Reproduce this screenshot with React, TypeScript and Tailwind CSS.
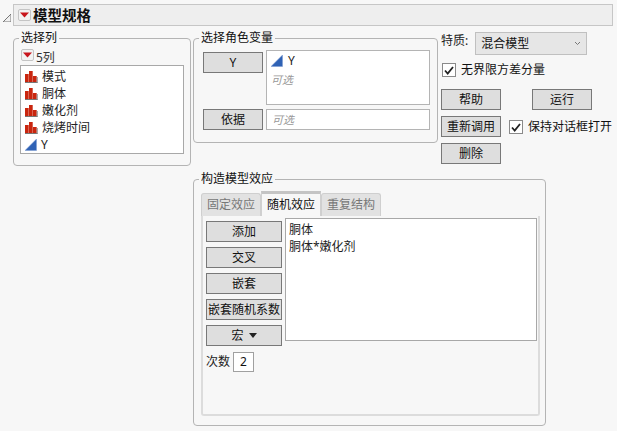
import React from "react";

const font = { fontFamily: '"Noto Sans", "Noto Sans CJK SC", sans-serif' };

function RedMenu({ className = "" }: { className?: string }) {
  return (
    <span className={"flex h-[12px] w-[13px] shrink-0 items-center justify-center rounded-[2px] border border-[#c4c4c4] bg-[#f2f2f2] " + className}>
      <svg width="9" height="6" viewBox="0 0 9 6"><path d="M0 0.5H9L4.5 5.5Z" fill="#c8161d" /></svg>
    </span>
  );
}

function Bars() {
  return (
    <svg width="13" height="12" viewBox="0 0 13 12" className="shrink-0">
      <rect x="0" y="3" width="3.7" height="8" fill="#c9260f" />
      <rect x="4" y="0" width="3.7" height="11" fill="#c9260f" />
      <rect x="8" y="5" width="3.7" height="6" fill="#c9260f" />
      <rect x="0" y="11" width="12.5" height="1" fill="#777" />
      <rect x="11.7" y="6" width="1" height="6" fill="#888" />
    </svg>
  );
}

function Tri() {
  return (
    <svg width="12" height="12" viewBox="0 0 12 12" className="shrink-0">
      <path d="M0 11.5L11.5 0V11.5Z" fill="#2f62b5" stroke="#7d9bd0" strokeWidth="0.5" />
    </svg>
  );
}

function Btn({ children, className = "" }: { children: React.ReactNode; className?: string }) {
  return (
    <div className={"flex h-[21px] items-center justify-center whitespace-nowrap border border-[#787878] bg-[#dedede] text-[12px] leading-none text-[#111] " + className}>
      {children}
    </div>
  );
}

function Group({ title, className = "", children }: { title: string; className?: string; children: React.ReactNode }) {
  return (
    <fieldset className={"min-w-0 rounded-[4px] border border-[#b4b4b4] " + className}>
      <legend className="ml-[5px] px-[2px] text-[12px] leading-[16px] text-[#111]">{title}</legend>
      {children}
    </fieldset>
  );
}

function Check({ label, className = "" }: { label: string; className?: string }) {
  return (
    <div className={"flex items-center gap-[5px] " + className}>
      <span className="flex h-[14px] w-[14px] items-center justify-center border border-[#8a8a8a] bg-white">
        <svg width="10" height="9" viewBox="0 0 10 9"><path d="M1 4.5L3.7 7.5L9 1" fill="none" stroke="#222" strokeWidth="1.8" /></svg>
      </span>
      <span className="whitespace-nowrap text-[12px] leading-none text-[#111]">{label}</span>
    </div>
  );
}

export default function App() {
  const cols: [string, boolean][] = [["模式", true], ["胴体", true], ["嫩化剂", true], ["烧烤时间", true], ["Y", false]];
  return (
    <div style={font} className="h-[431px] w-[617px] overflow-hidden bg-[#f7f7f7] pl-[3px] pt-[4px]">
      <div className="flex items-center gap-[2px]">
        <svg width="8" height="8" viewBox="0 0 8 8" className="mt-[6px] shrink-0"><path d="M0 8L8 0V8Z" fill="#f0f0f0" stroke="#777" strokeWidth="1" /></svg>
        <div className="flex h-[22px] w-[600px] items-center gap-[2px] border border-[#c6c6c6] bg-[#eeeeee] pl-[4px]">
          <RedMenu />
          <span className="text-[14.5px] font-bold leading-none text-[#111]">模型规格</span>
        </div>
      </div>

      <div className="ml-[10px] mt-[4px] flex items-start">
        <Group title="选择列" className="h-[136px] w-[178px]">
          <div className="flex h-[16px] items-start gap-[2px] pl-[7px] pt-[3px]">
            <RedMenu />
            <span className="mt-[3px] text-[12px] leading-none text-[#333]">5列</span>
          </div>
          <div className="ml-[6px] mt-[3px] h-[89px] w-[164px] border border-[#a8a8a8] bg-white pl-[4px] pt-[2px]">
            {cols.map(([n, nom]) => (
              <div key={n} className="flex h-[17px] items-center gap-[4px] text-[12px] leading-none text-[#222]">
                {nom ? <Bars /> : <Tri />}
                <span>{n}</span>
              </div>
            ))}
          </div>
        </Group>

        <Group title="选择角色变量" className="ml-[2px] h-[113px] w-[245px]">
          <div className="pl-[9px]">
            <div className="flex gap-[3px] pt-[4px]">
              <Btn className="mt-[2px] w-[60px]">Y</Btn>
              <div className="h-[55px] w-[164px] border border-[#b4b4b4] bg-white pl-[4px] pt-[2px]">
                <div className="flex h-[16px] items-center gap-[5px] text-[12px] leading-none text-[#222]"><Tri /><span>Y</span></div>
                <div className="mt-[5px] text-[11px] italic leading-none text-[#999]">可选</div>
              </div>
            </div>
            <div className="mt-[4px] flex gap-[3px]">
              <Btn className="w-[60px]">依据</Btn>
              <div className="flex h-[21px] w-[164px] items-center border border-[#b4b4b4] bg-white pl-[5px] text-[11px] italic leading-none text-[#999]">可选</div>
            </div>
          </div>
        </Group>

        <div className="ml-[3px] flex w-[172px] flex-col pt-[2px]">
          <div className="flex items-center gap-[7px]">
            <span className="mb-[5px] text-[12px] leading-none text-[#222]">特质:</span>
            <div className="flex h-[23px] w-[112px] items-center justify-between border border-[#c0c0c0] bg-[#e6e6e6] pl-[5px] pr-[5px]">
              <span className="text-[12px] leading-none text-[#111]">混合模型</span>
              <svg width="7" height="5" viewBox="0 0 7 5"><path d="M1 1L3.5 3.5L6 1" fill="none" stroke="#777" strokeWidth="1" /></svg>
            </div>
          </div>
          <Check label="无界限方差分量" className="ml-[1px] mt-[8px]" />
          <div className="mt-[12px] flex gap-[31px]">
            <Btn className="w-[60px]">帮助</Btn>
            <Btn className="w-[60px]">运行</Btn>
          </div>
          <div className="mt-[6px] flex items-center gap-[8px]">
            <Btn className="w-[60px]">重新调用</Btn>
            <Check label="保持对话框打开" className="mt-[1px]" />
          </div>
          <Btn className="mt-[6px] w-[60px]">删除</Btn>
        </div>
      </div>

      <div className="ml-[190px] mt-[5px]">
        <Group title="构造模型效应" className="h-[255px] w-[353px]">
          <div className="pl-[7px]">
            <div className="flex h-[29px] items-end">
              <div className="flex h-[23px] w-[60px] items-center justify-center rounded-t-[3px] border border-b-0 border-[#cfcfcf] bg-[#e2e2e2] text-[12px] leading-none text-[#777]">固定效应</div>
              <div className="flex h-[25px] w-[60px] items-center justify-center border-x border-t-[3px] border-x-[#d0d0d0] border-t-[#c4c4c4] bg-[#f7f7f7] text-[12px] leading-none text-[#111]">随机效应</div>
              <div className="flex h-[23px] w-[60px] items-center justify-center rounded-t-[3px] border border-b-0 border-[#cfcfcf] bg-[#e2e2e2] text-[12px] leading-none text-[#777]">重复结构</div>
            </div>
            <div className="flex h-[200px] w-[339px] gap-[3px] rounded-b-[3px] border-x-2 border-b-2 border-[#dcdcdc] pl-[3px] pt-[2px]">
              <div className="flex w-[76px] flex-col gap-[5px] pt-[3px]">
                <Btn>添加</Btn>
                <Btn>交叉</Btn>
                <Btn>嵌套</Btn>
                <Btn>嵌套随机系数</Btn>
                <Btn className="gap-[5px]">宏<svg width="8" height="5" viewBox="0 0 8 5"><path d="M0 0H8L4 5Z" fill="#222" /></svg></Btn>
                <div className="mt-[1px] flex items-center gap-[3px]">
                  <span className="text-[12px] leading-none text-[#222]">次数</span>
                  <span className="flex h-[20px] w-[21px] items-center justify-center border border-[#a0a0a0] bg-white text-[12px] leading-none text-[#111]">2</span>
                </div>
              </div>
              <div className="h-[123px] w-[252px] border border-[#a8a8a8] bg-white pl-[3px] pt-[2px] text-[12px] leading-[17px] text-[#222]">
                <div>胴体</div>
                <div>胴体*嫩化剂</div>
              </div>
            </div>
          </div>
        </Group>
      </div>
    </div>
  );
}
